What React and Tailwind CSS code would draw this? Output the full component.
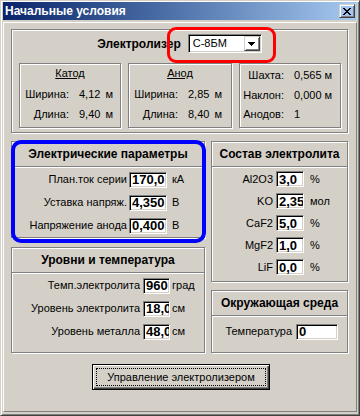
import React from 'react';

const etched = 'border border-[#808080] shadow-[inset_1px_1px_0_#fff,1px_1px_0_#fff]';
const sunken = 'border border-[#808080] border-b-white border-r-white shadow-[inset_1px_1px_0_#000,inset_-1px_-1px_0_#d4d0c8]';
const raised = 'border border-[#404040] border-t-[#d4d0c8] border-l-[#d4d0c8] shadow-[inset_1px_1px_0_#fff,inset_-1px_-1px_0_#808080]';

function Section({ title, className, children }) {
  return (
    <div className={`${etched} relative flex flex-col ${className}`}>
      <div className="h-[24px] flex items-center justify-center font-bold text-[12px]">{title}</div>
      <div className="border-t border-[#808080] border-b border-b-white" />
      {children}
    </div>
  );
}

function Field({ label, value, unit, labelW, inputW, unitGap, rowH = 'h-[23px]', inputGap = 'ml-[2px]' }) {
  return (
    <div className={`flex items-center ${rowH}`}>
      <span className={`${labelW} text-right whitespace-nowrap`}>{label}</span>
      <div className={`${sunken} ${inputGap} ${inputW} h-[16px] bg-white overflow-hidden whitespace-nowrap flex items-center pl-[2px] font-bold text-[13px] leading-none`}>
        {value}
      </div>
      {unit && <span className={unitGap}>{unit}</span>}
    </div>
  );
}

function InfoRow({ label, value, unit, labelW, rowH }) {
  return (
    <div className={`flex items-center ${rowH}`}>
      <span className={`${labelW} text-right`}>{label}</span>
      <span className="ml-[10px]">{value}</span>
      {unit && <span className="ml-[5px]">{unit}</span>}
    </div>
  );
}

export default function App() {
  return (
    <div className="w-[360px] h-[416px] bg-[#d4d0c8] border border-[#d4d0c8] border-r-[#404040] border-b-[#404040] shadow-[inset_1px_1px_0_#fff,inset_-1px_-1px_0_#808080] px-[2px] pt-[1px] pb-[3px] flex flex-col font-['Liberation_Sans',Arial,sans-serif] text-[11px] text-black select-none">
      {/* title bar */}
      <div className="h-[18px] flex items-center bg-linear-to-r from-[#0a246a] to-[#a6caf0] pl-[2px] pr-[2px]">
        <span className="text-white font-bold text-[12px]">Начальные условия</span>
        <div className={`${raised} ml-auto w-[16px] h-[14px] flex items-center justify-center`}>
          <svg width="8" height="7" viewBox="0 0 8 7" shapeRendering="crispEdges">
            <path d="M0 0h2l2 2.5L6 0h2L5 3.5 8 7H6L4 4.5 2 7H0l3-3.5z" fill="#000" />
          </svg>
        </div>
      </div>

      {/* client */}
      <div className="mt-[2px] h-[390px] border border-white border-r-[#808080] border-b-[#808080] pt-[6px] pl-[7px] flex flex-col">
        {/* electrolyser */}
        <div className={`${etched} relative w-[337px] h-[104px] flex flex-col`}>
          <div className="pt-[4px] flex items-center justify-center gap-[7px]">
            <span className="font-bold text-[12px]">Электролизер</span>
            <div className={`${sunken} w-[74px] h-[19px] bg-white flex items-center p-[1px]`}>
              <span className="pl-[3px]">С-8БМ</span>
              <div className={`${raised} ml-auto w-[16px] h-full flex items-center justify-center`}>
                <svg width="7" height="4" viewBox="0 0 7 4" shapeRendering="crispEdges">
                  <path d="M0 0h7L3.5 4z" fill="#000" />
                </svg>
              </div>
            </div>
          </div>
          <div className="mt-[10px] pl-[7px] flex gap-[7px]">
            <div className={`${etched} w-[102px] h-[65px] flex flex-col`}>
              <div className="pt-[2px] h-[16px] leading-[14px] text-center underline">Катод</div>
              <div className="mt-[4px]">
                <InfoRow label="Ширина:" value="4,12" unit="м" labelW="w-[49px]" rowH="h-[20px]" />
                <InfoRow label="Длина:" value="9,40" unit="м" labelW="w-[49px]" rowH="h-[20px]" />
              </div>
            </div>
            <div className={`${etched} w-[104px] h-[65px] flex flex-col`}>
              <div className="pt-[2px] h-[16px] leading-[14px] text-center underline">Анод</div>
              <div className="mt-[4px]">
                <InfoRow label="Ширина:" value="2,85" unit="м" labelW="w-[49px]" rowH="h-[20px]" />
                <InfoRow label="Длина:" value="8,40" unit="м" labelW="w-[49px]" rowH="h-[20px]" />
              </div>
            </div>
            <div className={`${etched} w-[102px] h-[65px] flex flex-col pt-[1px]`}>
              <InfoRow label="Шахта:" value="0,565 м" labelW="w-[44px]" rowH="h-[20px]" />
              <InfoRow label="Наклон:" value="0,000 м" labelW="w-[44px]" rowH="h-[21px]" />
              <InfoRow label="Анодов:" value="1" labelW="w-[44px]" rowH="h-[17px]" />
            </div>
          </div>
          <div className="absolute left-[155px] top-[-3px] w-[109px] h-[36px] border-[3px] border-[#ff0000] rounded-[9px] pointer-events-none" />
        </div>

        {/* parameters */}
        <div className="mt-[8px] h-[212px] flex gap-[6px]">
          <div className="w-[194px] flex flex-col gap-[9px]">
            <Section title="Электрические параметры" className="h-[97px]">
              <Field label="План.ток серии" value="170,0" unit="кА" labelW="w-[115px]" inputW="w-[38px]" unitGap="ml-[5px]" />
              <Field label="Уставка напряж." value="4,350" unit="В" labelW="w-[115px]" inputW="w-[38px]" unitGap="ml-[5px]" />
              <Field label="Напряжение анода" value="0,400" unit="В" labelW="w-[115px]" inputW="w-[38px]" unitGap="ml-[5px]" />
              <div className="absolute left-[-1px] top-[-2px] w-[195px] h-[103px] border-[4px] border-[#0000ff] rounded-[10px] pointer-events-none" />
            </Section>
            <Section title="Уровни и температура" className="flex-1">
              <Field label="Темп.электролита" value="960" unit="град" labelW="w-[128px]" inputW="w-[27px]" inputGap="ml-[3px]" unitGap="ml-[2px]" />
              <Field label="Уровень электролита" value="18,0" unit="см" labelW="w-[128px]" inputW="w-[27px]" inputGap="ml-[3px]" unitGap="ml-[2px]" />
              <Field label="Уровень металла" value="48,0" unit="см" labelW="w-[128px]" inputW="w-[27px]" inputGap="ml-[3px]" unitGap="ml-[2px]" />
            </Section>
          </div>
          <div className="w-[137px] flex flex-col gap-[8px]">
            <Section title="Состав электролита" className="h-[141px]">
              <Field label="Al2O3" value="3,0" unit="%" labelW="w-[61px]" inputW="w-[28px]" inputGap="ml-[3px]" unitGap="ml-[6px]" rowH="h-[22px]" />
              <Field label="KO" value="2,35" unit="мол" labelW="w-[61px]" inputW="w-[28px]" inputGap="ml-[3px]" unitGap="ml-[6px]" rowH="h-[22px]" />
              <Field label="CaF2" value="5,0" unit="%" labelW="w-[61px]" inputW="w-[28px]" inputGap="ml-[3px]" unitGap="ml-[6px]" rowH="h-[22px]" />
              <Field label="MgF2" value="1,0" unit="%" labelW="w-[61px]" inputW="w-[28px]" inputGap="ml-[3px]" unitGap="ml-[6px]" rowH="h-[22px]" />
              <Field label="LiF" value="0,0" unit="%" labelW="w-[61px]" inputW="w-[28px]" inputGap="ml-[3px]" unitGap="ml-[6px]" rowH="h-[22px]" />
            </Section>
            <Section title="Окружающая среда" className="flex-1">
              <div className="mt-[3px]">
                <Field label="Температура" value="0" labelW="w-[80px]" inputW="w-[42px]" inputGap="ml-[4px]" />
              </div>
            </Section>
          </div>
        </div>

        {/* button */}
        <button className="mt-[11px] ml-[81px] w-[178px] h-[26px] border border-black shadow-[inset_1px_1px_0_#fff,inset_-1px_-1px_0_#404040,inset_-2px_-2px_0_#808080] p-[3px] bg-[#d4d0c8]">
          <div className="w-full h-full border border-dotted border-black flex items-center justify-center text-[11px]">
            Управление электролизером
          </div>
        </button>
      </div>
    </div>
  );
}
